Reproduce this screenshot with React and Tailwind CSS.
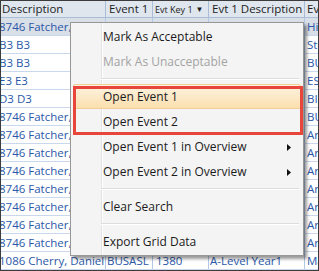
import React from 'react';

// grid rows: description, event 1, evt key 1, evt 1 description, next column
const rows = [
  ['8746 Fatcher, Daby', 'BUSASL', '1380', 'Business Manag', 'His'],
  ['B3 B3', 'B3', 'B3', 'B3', 'Stu'],
  ['B3 B3', 'B3', 'B3', 'B3', 'BUS'],
  ['E3 E3', 'E3', 'E3', 'E3', 'ESO'],
  ['D3 D3', 'D3', 'D3', 'D3', 'BIO'],
  ['8746 Fatcher, Daby', 'BUSASL', '1380', 'A-Level Year1', 'BUS'],
  ['8746 Fatcher, Daby', 'BUSASL', '1380', 'A-Level Year1', 'Art'],
  ['8746 Fatcher, Daby', 'BUSASL', '1380', 'A-Level Year1', 'Art'],
  ['8746 Fatcher, Daby', 'BUSASL', '1380', 'A-Level Year1', 'Art'],
  ['8746 Fatcher, Daby', 'BUSASL', '1380', 'A-Level Year1', 'Art'],
  ['8746 Fatcher, Daby', 'BUSASL', '1380', 'A-Level Year1', 'Art'],
  ['8746 Fatcher, Daby', 'BUSASL', '1380', 'A-Level Year1', 'Art'],
  ['8746 Fatcher, Daby', 'BUSASL', '1380', 'A-Level Year1', 'Art'],
  ['1086 Cherry, Daniel', 'BUSASL', '1380', 'A-Level Year1', 'Mat'],
];

const MenuItem = ({ label, disabled, highlighted, submenu }) => (
  <div
    className={`relative h-[25px] flex items-center mx-[2px] rounded-[2px] ${
      highlighted
        ? 'border border-[#f0cf95] bg-gradient-to-b from-[#fdf3e2] to-[#fbdfad]'
        : 'border border-transparent'
    }`}
  >
    <span className={`pl-[29px] ${disabled ? 'text-[#a3a3a3]' : 'text-[#1b1b1b]'}`}>{label}</span>
    {submenu && (
      <svg className="absolute right-[9px] top-[9px]" width="4" height="7" viewBox="0 0 4 7">
        <path d="M0 0 L4 3.5 L0 7 Z" fill="#111" />
      </svg>
    )}
  </div>
);

const Separator = () => (
  <div className="h-[10px] flex flex-col justify-center pl-[30px] pr-[4px]">
    <div className="h-px bg-[#dcdcdc]" />
    <div className="h-px bg-white" />
  </div>
);

const App = () => {
  return (
    <div className="w-[319px] h-[271px] relative overflow-hidden border border-[#3c3c3c] bg-white font-['Open_Sans',sans-serif] text-[11.5px] leading-none">
      {/* Header */}
      <div className="flex h-[17px] bg-[#dfe6ee] border-b border-[#a9bdd6] text-[#1d1d1d]">
        <div className="w-[105px] shrink-0 border-r border-[#a9bdd6] flex items-center pl-[1px]">Description</div>
        <div className="w-[47px] shrink-0 border-r border-[#a9bdd6] flex items-center pl-[3px]">Event 1</div>
        <div className="w-[56px] shrink-0 border-r border-[#a9bdd6] flex items-center pl-[2px] text-[9px]">
          Evt Key 1 <span className="ml-[3px] text-[8px]">▼</span>
        </div>
        <div className="w-[96px] shrink-0 border-r border-[#a9bdd6] flex items-center pl-[3px]">Evt 1 Description</div>
        <div className="flex-1 flex items-center pl-[2px] overflow-hidden">Ev</div>
      </div>

      {/* Rows */}
      {rows.map((r, i) => (
        <div
          key={i}
          className={`flex h-[18px] border-b border-[#c9d8ec] text-[#2b58a8] ${i === 0 ? 'bg-[#d9dfe7]' : ''}`}
        >
          <div className="w-[105px] shrink-0 border-r border-[#b3c8e6] flex items-center overflow-hidden whitespace-nowrap">
            <span className="-ml-[2px]">{r[0]}</span>
          </div>
          <div className="w-[47px] shrink-0 border-r border-[#b3c8e6] flex items-center pl-[1px] overflow-hidden whitespace-nowrap">{r[1]}</div>
          <div className="w-[56px] shrink-0 border-r border-[#b3c8e6] flex items-center pl-[3px] overflow-hidden whitespace-nowrap">{r[2]}</div>
          <div className="w-[96px] shrink-0 border-r border-[#b3c8e6] flex items-center pl-[1px] overflow-hidden whitespace-nowrap">{r[3]}</div>
          <div className="flex-1 flex items-center pl-[2px] overflow-hidden whitespace-nowrap">{r[4]}</div>
        </div>
      ))}

      {/* Context menu */}
      <div className="absolute left-[69px] top-[21px] w-[234px] bg-[#f4f4f4] border border-[#979797] py-px text-[12px] shadow-[3px_3px_3px_rgba(0,0,0,0.4)]">
        <div className="absolute left-[30px] top-0 bottom-0 w-px bg-[#e3e3e3]" />
        <div className="absolute left-[31px] top-0 bottom-0 w-px bg-white" />
        <div className="relative">
          <MenuItem label="Mark As Acceptable" />
          <MenuItem label="Mark As Unacceptable" disabled />
          <Separator />
          <MenuItem label="Open Event 1" highlighted />
          <MenuItem label="Open Event 2" />
          <MenuItem label="Open Event 1 in Overview" submenu />
          <MenuItem label="Open Event 2 in Overview" submenu />
          <Separator />
          <MenuItem label="Clear Search" />
          <Separator />
          <MenuItem label="Export Grid Data" />
        </div>
        {/* annotation box */}
        <div className="absolute left-[2px] top-[63px] w-[230px] h-[49px] border-[3px] border-[#e8453b]" />
      </div>
    </div>
  );
};

export default App;
